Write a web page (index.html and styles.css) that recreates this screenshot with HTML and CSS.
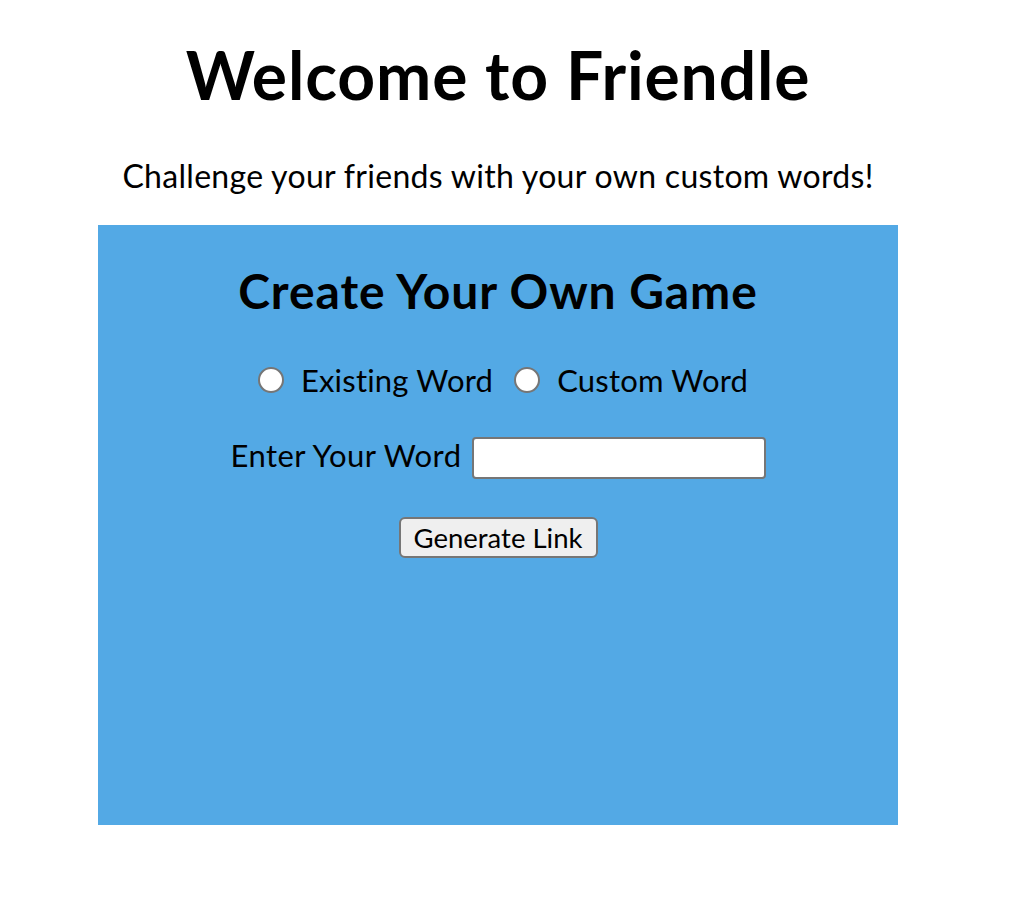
FILE: index.html
```html
<!DOCTYPE html>
<html lang="en">
<head>
<meta charset="utf-8">
<title>Friendle</title>
<link rel="stylesheet" href="styles.css">
</head>
<body>
<div class="page">
  <h1 class="title">Welcome to Friendle</h1>
  <p class="tagline">Challenge your friends with your own custom words!</p>
  <section class="card">
    <h2 class="card-title">Create Your Own Game</h2>
    <div class="choice-row">
      <label class="choice"><input class="radio" type="radio" name="mode"><span>Existing Word</span></label>
      <label class="choice"><input class="radio" type="radio" name="mode"><span>Custom Word</span></label>
    </div>
    <div class="word-row">
      <label class="word-label" for="word">Enter Your Word</label>
      <input class="word-input" id="word" type="text">
    </div>
    <button class="generate" type="button">Generate Link</button>
  </section>
</div>
</body>
</html>
```

FILE: styles.css
```css
html, body {
  margin: 0;
  padding: 0;
  background: #ffffff;
}

body {
  font-family: "Lato", "Open Sans", sans-serif;
  color: #000000;
}

.page {
  width: 996px;
  display: flex;
  flex-direction: column;
  align-items: center;
  text-align: center;
}

.title {
  margin: 42px 0 0;
  font-size: 66px;
  line-height: 66px;
  font-weight: 700;
  letter-spacing: 0.85px;
}

.tagline {
  margin: 50px 0 0;
  font-size: 32px;
  line-height: 36px;
  letter-spacing: 0.3px;
}

.card {
  margin-top: 31px;
  width: 800px;
  height: 600px;
  box-sizing: border-box;
  padding-top: 41px;
  background: #53a9e5;
  display: flex;
  flex-direction: column;
  align-items: center;
}

.card-title {
  margin: 0;
  font-size: 48px;
  line-height: 50px;
  font-weight: 700;
  letter-spacing: 0.9px;
}

.choice-row {
  margin-top: 47px;
  padding-left: 10px;
  display: flex;
  align-items: center;
  gap: 21px;
  font-size: 31px;
  line-height: 34px;
  letter-spacing: 0.2px;
}

.choice {
  display: inline-flex;
  align-items: center;
  gap: 17px;
}

.radio {
  appearance: none;
  -webkit-appearance: none;
  margin: 0;
  width: 26px;
  height: 26px;
  box-sizing: border-box;
  border: 2px solid #767676;
  border-radius: 50%;
  background: #ffffff;
}

.word-row {
  margin-top: 40px;
  display: flex;
  align-items: center;
  gap: 10px;
}

.word-label {
  font-size: 31px;
  line-height: 34px;
  letter-spacing: 0.45px;
  padding-bottom: 6px;
}

.word-input {
  margin: 0;
  width: 294px;
  height: 42px;
  box-sizing: border-box;
  border: 2px solid #767676;
  border-radius: 4px;
  background: #ffffff;
  font-family: inherit;
  font-size: 26px;
  padding: 2px 6px;
}

.generate {
  margin-top: 38px;
  width: 199px;
  height: 41px;
  box-sizing: border-box;
  padding: 0;
  border: 2px solid #767676;
  border-radius: 6px;
  background: #efefef;
  font-family: inherit;
  font-size: 27.5px;
  color: #000000;
}
```
